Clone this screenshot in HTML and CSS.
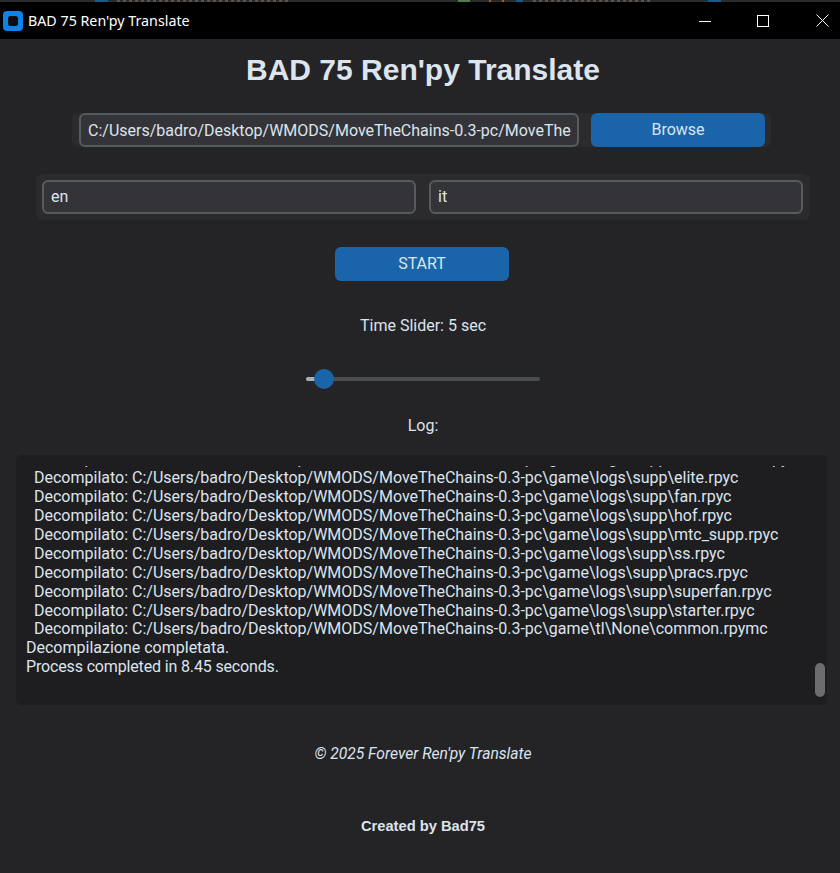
FILE: index.html
```html
<!DOCTYPE html>
<html lang="it">
<head>
<meta charset="utf-8">
<title>BAD 75 Ren'py Translate</title>
<link rel="stylesheet" href="styles.css">
</head>
<body>
<div class="strip"></div>
<header class="titlebar">
  <svg class="app-icon" width="20" height="20" viewBox="0 0 20 20"><rect width="20" height="20" rx="4" fill="#0a84e8"/><rect x="5" y="5" width="10" height="10" rx="2.5" fill="#0b0d12"/></svg>
  <span class="app-name">BAD 75 Ren'py Translate</span>
  <div class="win-controls">
    <svg width="12" height="12" viewBox="0 0 12 12"><path d="M0 6.5H12" stroke="#fff" fill="none"/></svg>
    <svg width="12" height="12" viewBox="0 0 12 12"><rect x=".5" y=".5" width="11" height="11" stroke="#fff" fill="none"/></svg>
    <svg class="win-close" width="13" height="13" viewBox="0 0 13 13"><path d="M.5 .5L12.5 12.5M12.5 .5L.5 12.5" stroke="#fff" fill="none"/></svg>
  </div>
</header>
<main class="app">
  <h1 class="title">BAD 75 Ren'py Translate</h1>
  <div class="frame path-frame">
    <div class="entry path-entry">C:/Users/badro/Desktop/WMODS/MoveTheChains-0.3-pc/MoveThe</div>
    <div class="btn browse">Browse</div>
  </div>
  <div class="frame lang-frame">
    <div class="entry lang-entry">en</div>
    <div class="entry lang-entry">it</div>
  </div>
  <div class="btn start">START</div>
  <div class="slider-label">Time Slider: 5 sec</div>
  <div class="slider"><span class="slider-fill"></span><span class="slider-thumb"></span></div>
  <div class="log-label">Log:</div>
  <section class="log">
    <div class="log-lines">
      <div class="line in clipped">Decompilato: C:/Users/badro/Desktop/WMODS/MoveTheChains-0.3-pc\game\logs\supp\hallofheroes.rpyc</div>
      <div class="line in">Decompilato: C:/Users/badro/Desktop/WMODS/MoveTheChains-0.3-pc\game\logs\supp\elite.rpyc</div>
      <div class="line in">Decompilato: C:/Users/badro/Desktop/WMODS/MoveTheChains-0.3-pc\game\logs\supp\fan.rpyc</div>
      <div class="line in">Decompilato: C:/Users/badro/Desktop/WMODS/MoveTheChains-0.3-pc\game\logs\supp\hof.rpyc</div>
      <div class="line in">Decompilato: C:/Users/badro/Desktop/WMODS/MoveTheChains-0.3-pc\game\logs\supp\mtc_supp.rpyc</div>
      <div class="line in">Decompilato: C:/Users/badro/Desktop/WMODS/MoveTheChains-0.3-pc\game\logs\supp\ss.rpyc</div>
      <div class="line in">Decompilato: C:/Users/badro/Desktop/WMODS/MoveTheChains-0.3-pc\game\logs\supp\pracs.rpyc</div>
      <div class="line in">Decompilato: C:/Users/badro/Desktop/WMODS/MoveTheChains-0.3-pc\game\logs\supp\superfan.rpyc</div>
      <div class="line in">Decompilato: C:/Users/badro/Desktop/WMODS/MoveTheChains-0.3-pc\game\logs\supp\starter.rpyc</div>
      <div class="line in">Decompilato: C:/Users/badro/Desktop/WMODS/MoveTheChains-0.3-pc\game\tl\None\common.rpymc</div>
      <div class="line">Decompilazione completata.</div>
      <div class="line tight">Process completed in 8.45 seconds.</div>
    </div>
    <span class="scroll-thumb"></span>
  </section>
  <div class="copyright">© 2025 Forever Ren'py Translate</div>
  <div class="credit">Created by Bad75</div>
</main>
</body>
</html>
```
FILE: styles.css
```css
* { box-sizing: border-box; }
html, body { margin: 0; height: 100%; }
body { background: #242326; color: #dce4ee; font-family: Roboto, sans-serif; font-size: 16px; overflow: hidden; }
.strip {
  height: 2px;
  background:
    linear-gradient(#1a5a8a, #1a5a8a) 95px 0 / 13px 2px no-repeat,
    linear-gradient(#1a5a8a, #1a5a8a) 516px 0 / 7px 2px no-repeat,
    linear-gradient(#1a5a8a, #1a5a8a) 708px 0 / 13px 2px no-repeat,
    linear-gradient(#4c7f4c, #4c7f4c) 458px 0 / 12px 2px no-repeat,
    linear-gradient(#96602f, #96602f) 489px 0 / 2px 2px no-repeat,
    linear-gradient(#96602f, #96602f) 502px 0 / 2px 2px no-repeat,
    repeating-linear-gradient(90deg, #5f5348 0 3px, #2b2b2b 3px 6px) 117px 0 / 172px 2px no-repeat,
    repeating-linear-gradient(90deg, #5f5348 0 3px, #2b2b2b 3px 6px) 533px 0 / 120px 2px no-repeat,
    #2b2b2b;
}
.titlebar { height: 37px; background: #000; color: #fff; display: flex; align-items: center; padding-left: 3px; font-family: "Noto Sans", sans-serif; font-size: 14.25px; }
.app-icon { margin-right: 5px; }
.win-controls { margin-left: auto; display: flex; align-items: center; gap: 46px; padding-right: 11px; }
.win-close { margin-left: 1px; }
.app { display: flex; flex-direction: column; align-items: center; width: 846px; }
.title { margin: 13px 0 0; font: bold 30px/36px "Liberation Sans", sans-serif; }
.frame { background: #2b2a2d; border-radius: 6px; display: flex; }
.path-frame { margin: 25px 0 0 -3px; width: 699px; height: 34px; padding-left: 7px; gap: 12px; }
.entry { height: 34px; line-height: 31px; background: #343438; border: 2px solid #565b5e; border-radius: 6px; padding: 0 7px; white-space: nowrap; overflow: hidden; }
.path-entry { width: 500px; }
.btn { height: 34px; line-height: 33px; text-align: center; background: #1a65a9; border-radius: 6px; width: 174px; }
.lang-frame { margin-top: 27px; width: 774px; height: 46px; padding: 6px 7px 6px 6px; gap: 13px; }
.lang-entry { width: 374px; line-height: 30px; }
.start { margin: 27px 0 0 -2px; }
.slider-label { margin-top: 36px; height: 18px; line-height: 18px; }
.slider { margin-top: 42px; position: relative; width: 234px; height: 4px; background: #4a4d50; border-radius: 2px; }
.slider-fill { position: absolute; left: 0; top: 0; width: 18px; height: 4px; background: #aab0b5; border-radius: 2px; }
.slider-thumb { position: absolute; left: 7.5px; top: -8px; width: 20px; height: 20px; border-radius: 50%; background: #1a65a9; }
.log-label { margin-top: 36px; height: 18px; line-height: 18px; }
.log { margin: 20px 3px 0 0; position: relative; width: 811px; height: 250px; background: #1e1d20; border-radius: 6px; padding: 11px 10px 0; overflow: hidden; }
.log-lines { height: 229px; overflow: hidden; }
.line { height: 18.9px; line-height: 18.9px; white-space: nowrap; }
.tight { letter-spacing: -.15px; }
.clipped { margin-top: -15.6px; }
.in { padding-left: 8px; }
.scroll-thumb { position: absolute; right: 2px; top: 208px; width: 10px; height: 34px; border-radius: 5px; background: #6c6c70; }
.copyright { margin-top: 40px; height: 18px; line-height: 18px; font-style: italic; font-size: 15.65px; }
.credit { margin-top: 54px; height: 18px; font: bold 14.7px/18px "Liberation Sans", sans-serif; }
```
